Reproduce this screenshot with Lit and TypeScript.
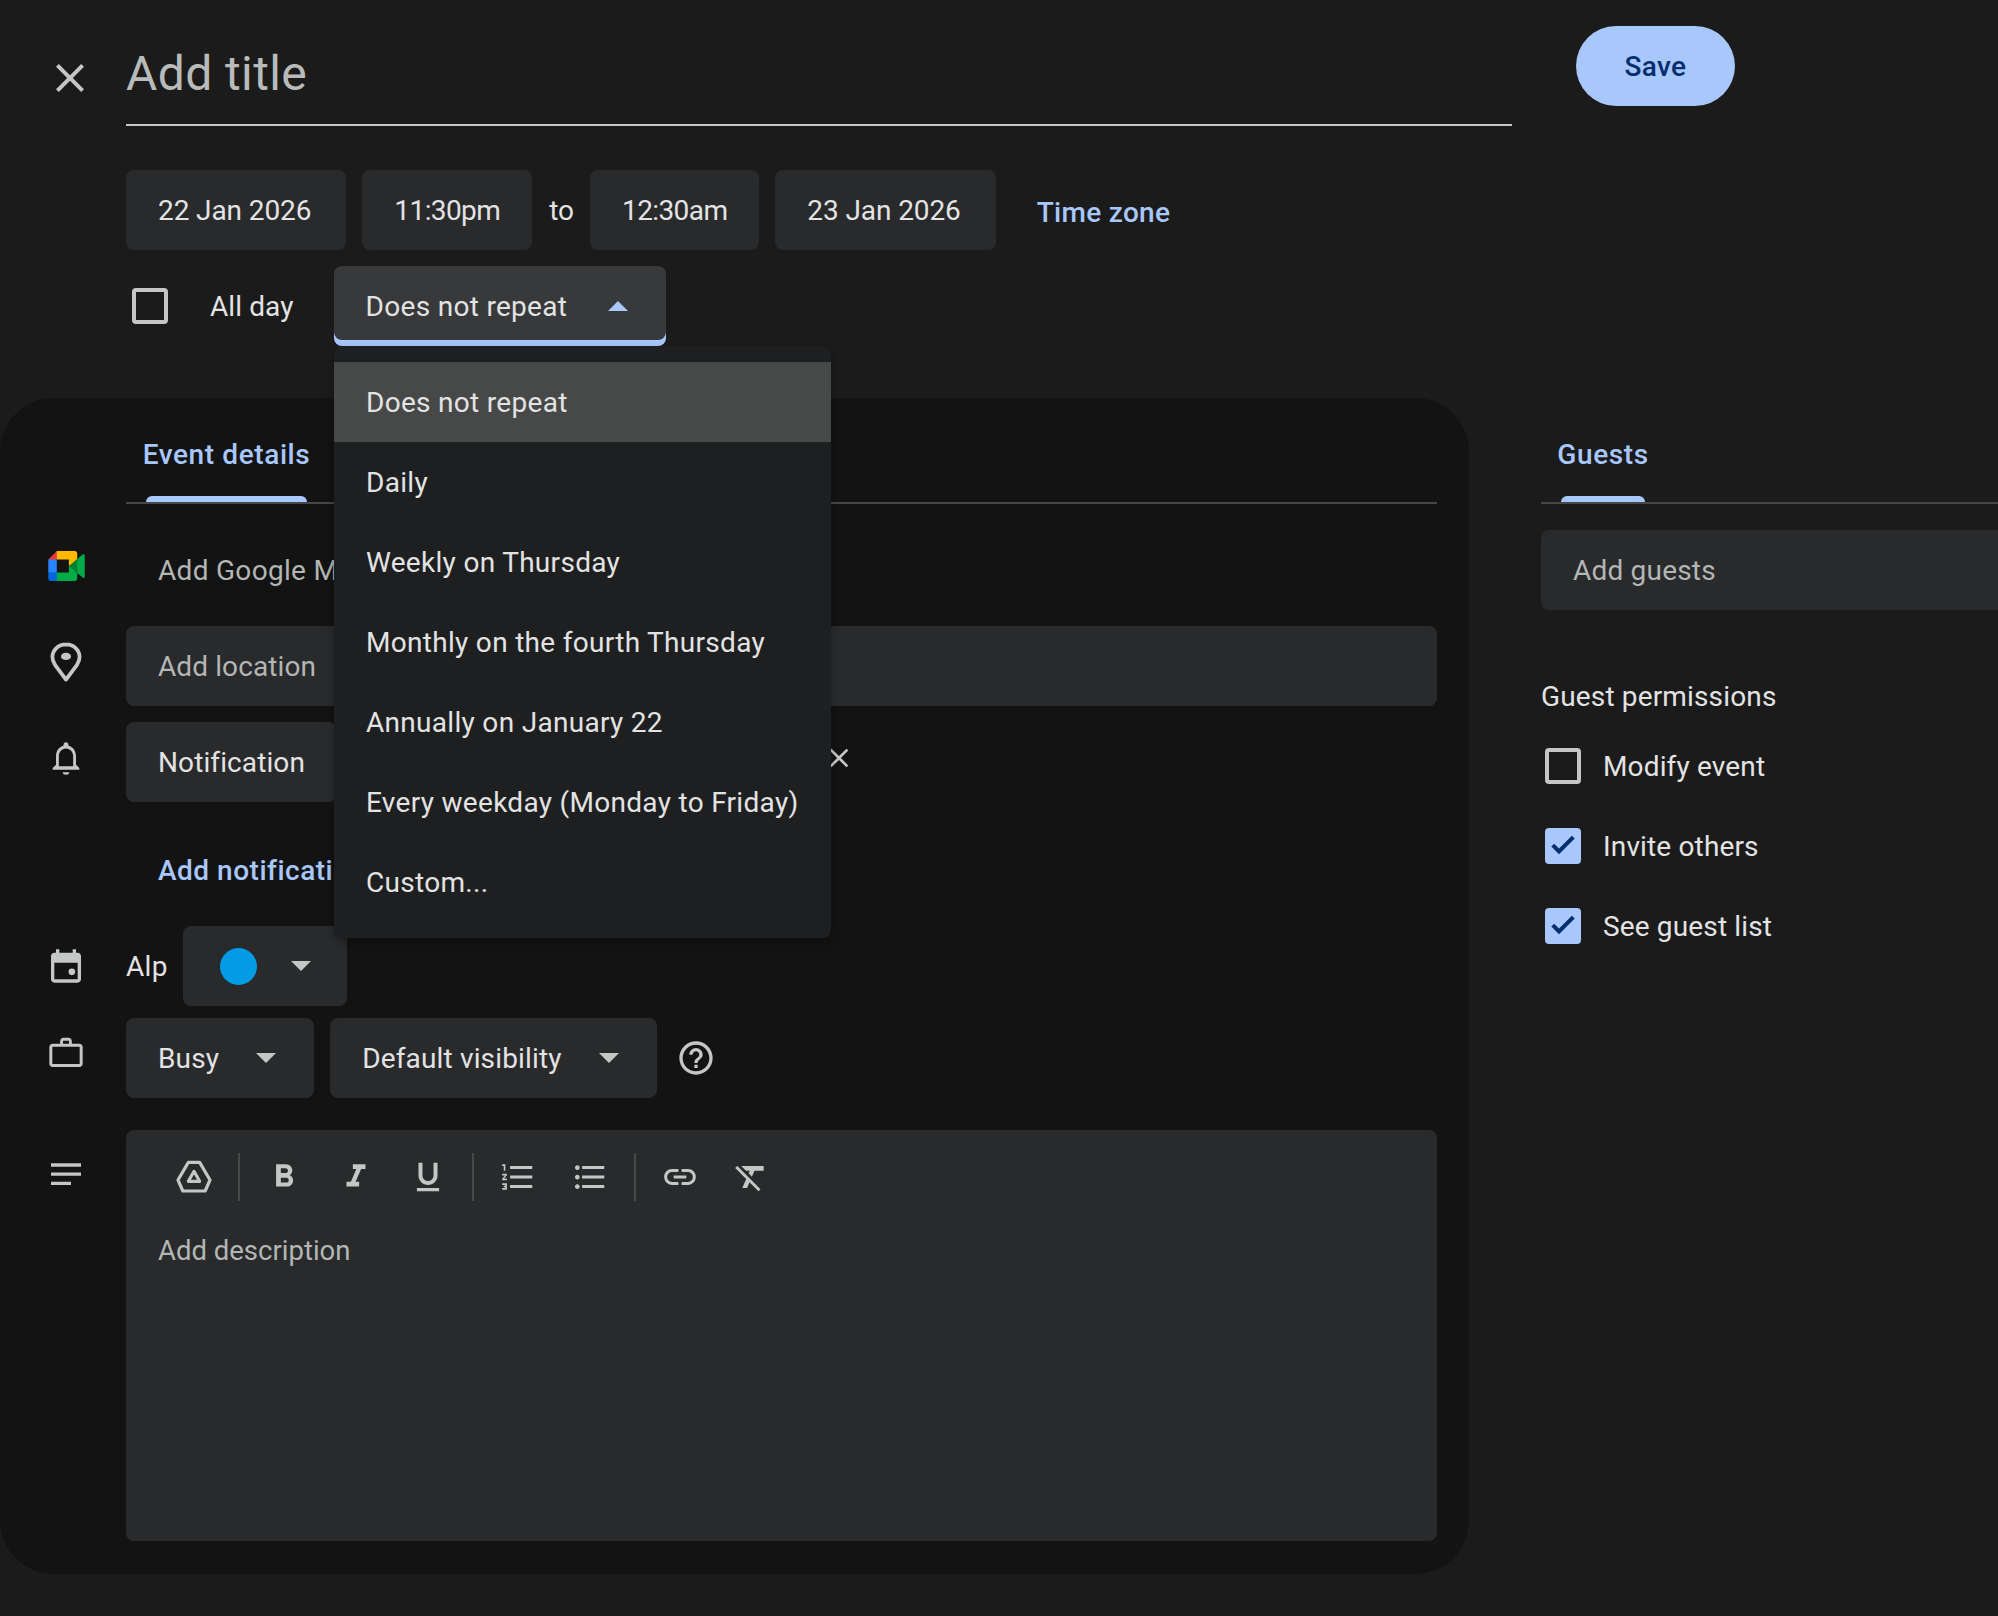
import { LitElement, html, css, svg } from 'lit';
import { customElement } from 'lit/decorators.js';

const repeatOptions = [
    'Does not repeat',
    'Daily',
    'Weekly on Thursday',
    'Monthly on the fourth Thursday',
    'Annually on January 22',
    'Every weekday (Monday to Friday)',
    'Custom...',
];

const permissions = [
    { label: 'Modify event', checked: false },
    { label: 'Invite others', checked: true },
    { label: 'See guest list', checked: true },
];

const icon = (size: number, body: unknown) => html`
    <svg class="icon" width=${size} height=${size} viewBox="0 0 24 24" fill="currentColor">${body}</svg>`;

const paths = {
    close: svg`<path d="M19 6.41 17.59 5 12 10.59 6.41 5 5 6.41 10.59 12 5 17.59 6.41 19 12 13.41 17.59 19 19 17.59 13.41 12z"/>`,
    pin: svg`<path fill="none" stroke="currentColor" stroke-width="1.9" stroke-linejoin="round" d="M12 3.2C8.2 3.2 5.2 6 5.2 9.5c0 1.4.6 2.7 1.3 3.9L12 20.8l5.5-7.4c.7-1.2 1.3-2.5 1.3-3.9C18.800 6 15.800 3.200 12 3.200z"/><ellipse cx="12" cy="9.200" rx="2.500" ry="1.800"/>`,
    bell: svg`<path d="M12 22c1.100 0 2-.5 2-1.500h-4c0 1 .9 1.500 2 1.500zm6-6v-5c0-3.070-1.630-5.640-4.500-6.320V4c0-.83-.67-1.500-1.500-1.500s-1.500.67-1.500 1.500v.68C7.640 5.360 6 7.920 6 11v5l-2 2v1h16v-1l-2-2zm-1.700 1H7.700v-6c0-2.480 1.800-4.700 4.300-4.700s4.300 2.220 4.300 4.700z"/>`,
    calendar: svg`<path d="M19 4h-1V2h-2v2H8V2H6v2H5c-1.100 0-2 .9-2 2v14c0 1.100.9 2 2 2h14c1.100 0 2-.9 2-2V6c0-1.100-.9-2-2-2zm0 16H5V10h14z"/><circle cx="15.500" cy="15.500" r="2"/>`,
    briefcase: svg`<path d="M20 7h-4.500V5.500c0-1.100-.9-2-2-2h-3c-1.100 0-2 .9-2 2V7H4c-1.100 0-2 .9-2 2v10c0 1.100.9 2 2 2h16c1.100 0 2-.9 2-2V9c0-1.100-.9-2-2-2zM10.200 5.200h3.600V7h-3.600zM20.200 19.200H3.800V8.800h16.400z"/>`,
    notes: svg`<path d="M3 5h18v2H3zm0 5.500h18v2H3zM3 16h12v2H3z"/>`,
    help: svg`<path d="M11 18h2v-2h-2zm1-16C6.480 2 2 6.480 2 12s4.480 10 10 10 10-4.480 10-10S17.520 2 12 2zm0 18c-4.410 0-8-3.590-8-8s3.590-8 8-8 8 3.590 8 8-3.590 8-8 8zm0-14c-2.210 0-4 1.790-4 4h2c0-1.100.9-2 2-2s2 .9 2 2c0 2-3 1.750-3 5h2c0-2.250 3-2.500 3-5 0-2.210-1.790-4-4-4z"/>`,
    drive: svg`<path fill="none" stroke="currentColor" stroke-width="1.900" stroke-linejoin="round" d="M8.600 3.200h6.800l6.200 10.600-2.900 6.600H5.300l-2.900-6.600z"/><path fill="none" stroke="currentColor" stroke-width="1.900" stroke-linejoin="round" d="M12 8.600l3.400 6H8.600z"/>`,
    bold: svg`<path d="M15.600 10.790c.97-.67 1.650-1.770 1.650-2.790 0-2.260-1.750-4-4-4H7v14h7.040c2.090 0 3.710-1.700 3.710-3.790 0-1.520-.86-2.820-2.150-3.420zM10 6.500h3c.83 0 1.500.67 1.500 1.500s-.67 1.500-1.500 1.500h-3v-3zm3.500 9H10v-3h3.500c.83 0 1.500.67 1.500 1.500s-.67 1.500-1.500 1.500z"/>`,
    italic: svg`<path d="M10 4v3h2.210l-3.420 8H6v3h8v-3h-2.210l3.420-8H18V4z"/>`,
    underline: svg`<path d="M12 17c3.310 0 6-2.690 6-6V3h-2.500v8c0 1.930-1.570 3.500-3.500 3.500S8.500 12.930 8.500 11V3H6v8c0 3.310 2.690 6 6 6zm-7 2v2h14v-2H5z"/>`,
    numbered: svg`<path d="M2 17h2v.5H3v1h1v.5H2v1h3v-4H2v1zm1-9h1V4H2v1h1v3zm-1 3h1.800L2 13.100v.9h3v-1H3.200L5 10.900V10H2v1zm5-6v2h14V5H7zm0 14h14v-2H7v2zm0-6h14v-2H7v2z"/>`,
    bulleted: svg`<path d="M4 10.500c-.83 0-1.500.67-1.500 1.500s.67 1.500 1.500 1.500 1.500-.67 1.500-1.500-.67-1.500-1.500-1.500zm0-6c-.83 0-1.500.67-1.500 1.500S3.170 7.500 4 7.500 5.500 6.830 5.500 6 4.830 4.500 4 4.500zm0 12c-.83 0-1.500.68-1.500 1.500s.68 1.500 1.500 1.500 1.500-.68 1.500-1.500-.67-1.500-1.500-1.500zM7 19h14v-2H7v2zm0-6h14v-2H7v2zm0-8v2h14V5H7z"/>`,
    link: svg`<path d="M3.900 12c0-1.710 1.390-3.100 3.100-3.100h4V7H7c-2.760 0-5 2.240-5 5s2.240 5 5 5h4v-1.900H7c-1.710 0-3.100-1.390-3.100-3.100zM8 13h8v-2H8v2zm9-6h-4v1.900h4c1.710 0 3.100 1.390 3.100 3.100s-1.390 3.100-3.100 3.100h-4V17h4c2.760 0 5-2.240 5-5s-2.240-5-5-5z"/>`,
    clear: svg`<path d="M3.270 5L2 6.270l6.970 6.970L6.500 19h3l1.570-3.660L16.730 21 18 19.730 3.550 5.270 3.270 5zM6 5v.18L8.820 8h2.400l-.72 1.680 2.100 2.100L14.210 8H20V5H6z"/>`,
    check: svg`<path d="M9.500 17.200 4.600 12.300l1.800-1.800 3.100 3.100 8.100-8.100 1.800 1.800z"/>`,
};

const meetLogo = html`
    <svg class="raised" width="37" height="30" viewBox="0 0 87.500 72">
        <path fill="#00832d" d="M49.500 36l8.530 9.750 11.470 7.330 2-17.020-2-16.640-11.690 6.440z"/>
        <path fill="#0066da" d="M0 51.500V66c0 3.315 2.685 6 6 6h14.500l3-10.960-3-9.540-9.950-3z"/>
        <path fill="#e53935" d="M20.500 0L0 20.500l10.550 3 9.950-3 2.950-9.410z"/>
        <path fill="#2684fc" d="M20.500 20.500H0v31h20.500z"/>
        <path fill="#00ac47" d="M82.600 8.680L69.500 19.420v33.660l13.160 10.790c1.970 1.540 4.850.135 4.850-2.370V11c0-2.535-2.945-3.925-4.910-2.320zM49.500 36v15.500h-29V72h43c3.315 0 6-2.685 6-6V53.080z"/>
        <path fill="#ffba00" d="M63.500 0h-43v20.500h29V36l20-16.570V6c0-3.315-2.685-6-6-6z"/>
    </svg>`;

@customElement('app-root')
export class AppRoot extends LitElement {
    static styles = css`
:host {
    display: block;
    width: 1998px;
    height: 1616px;
    overflow: hidden;
    position: relative;
    background: #1b1b1b;
    color: #e3e3e3;
    font-family: Roboto, "Liberation Sans", sans-serif;
    font-size: 28px;
    letter-spacing: 0.3px;
}

.icon {
    display: block;
    flex: none;
}

.header {
    display: flex;
    height: 126px;
}

.close {
    width: 126px;
    display: flex;
    justify-content: center;
    padding: 54px 0 0 14px;
    box-sizing: border-box;
    color: #c4c7c5;
}

.title {
    width: 1386px;
    box-sizing: border-box;
    border-bottom: 2px solid #c4c7c5;
    padding-top: 44px;
    font-size: 48px;
    line-height: 60px;
    letter-spacing: 0.4px;
    color: #b8bbb9;
}

.save {
    margin: 26px 0 0 64px;
    width: 159px;
    height: 80px;
    border-radius: 40px;
    background: #a8c7fa;
    color: #062e6f;
    font-weight: 500;
    display: flex;
    align-items: center;
    justify-content: center;
}

.dates {
    display: flex;
    align-items: center;
    gap: 16px;
    margin: 44px 0 0 126px;
}

.field {
    height: 80px;
    box-sizing: border-box;
    padding: 0 32px;
    display: flex;
    align-items: center;
    border-radius: 8px;
    background: #292a2c;
    white-space: nowrap;
    flex: none;
}

.date {
    letter-spacing: -0.1px;
    padding-right: 35px;
}

.time {
    letter-spacing: -0.6px;
    padding-right: 32px;
}

.muted {
    color: #b3b6b4;
}

.accent {
    color: #a8c7fa;
    font-weight: 500;
    letter-spacing: 0.5px;
}

.to {
    margin: 0 0 0 1px;
    letter-spacing: 0;
}

.tz {
    margin: 4px 0 0 25px;
    letter-spacing: 0.3px;
}

.repeat-row {
    display: flex;
    align-items: center;
    height: 80px;
    margin: 16px 0 0 132px;
}

.box {
    width: 36px;
    height: 36px;
    flex: none;
    box-sizing: border-box;
    border: 4px solid #c4c7c5;
    border-radius: 4px;
}

.box.on {
    background: #a8c7fa;
    border-color: #a8c7fa;
    color: #062e6f;
    display: flex;
    align-items: center;
    justify-content: center;
}

.allday {
    margin: 0 40px 0 42px;
    letter-spacing: 0.1px;
}

.select {
    width: 332px;
    height: 80px;
    box-sizing: border-box;
    padding: 0 32px;
    display: flex;
    align-items: center;
    justify-content: space-between;
    background: #37393b;
    border-radius: 8px;
    box-shadow: inset 0 -6px 0 #a8c7fa;
}

.up {
    width: 0;
    height: 0;
    margin-right: 6px;
    border: 10px solid transparent;
    border-top: 0;
    border-bottom: 10px solid #a8c7fa;
}

.down {
    width: 0;
    height: 0;
    border: 10px solid transparent;
    border-bottom: 0;
    border-top: 10px solid #c4c7c5;
}

.menu {
    position: absolute;
    left: 334px;
    top: 346px;
    width: 497px;
    height: 592px;
    box-sizing: border-box;
    padding: 16px 0;
    background: #1e1f21;
    border-radius: 8px;
    box-shadow: 0 4px 8px rgba(0, 0, 0, 0.3);
    z-index: 2;
}

.item {
    height: 80px;
    padding-left: 32px;
    display: flex;
    align-items: center;
    white-space: nowrap;
}

.item.active {
    background: #474948;
}

.body {
    display: flex;
    gap: 72px;
    margin-top: 52px;
}

.panel {
    width: 1469px;
    height: 1176px;
    flex: none;
    box-sizing: border-box;
    padding-right: 32px;
    background: #131313;
    border-radius: 54px;
}

.tabs {
    height: 106px;
    box-sizing: border-box;
    border-bottom: 2px solid #474747;
    display: flex;
}

.panel .tabs {
    margin-left: 126px;
}

.tab {
    position: relative;
    box-sizing: border-box;
    height: 104px;
    padding: 41px 0 0;
    line-height: 32px;
    color: #a8c7fa;
    font-weight: 500;
    letter-spacing: 0.6px;
    display: flex;
    justify-content: center;
    white-space: nowrap;
}

.tab.details {
    margin-left: 17px;
    width: 167px;
}

.tab.guests {
    margin-left: 16px;
    width: 92px;
}

.bar {
    position: absolute;
    bottom: 0;
    height: 6px;
    border-radius: 6px 6px 0 0;
    background: #a8c7fa;
}

.tab.details .bar {
    left: 3px;
    right: 3px;
}

.tab.guests .bar {
    left: 4px;
    right: 4px;
}

.rows {
    display: flex;
    flex-direction: column;
    gap: 16px;
    margin-top: 26px;
}

.row {
    display: flex;
    align-items: center;
    height: 80px;
}

.row.tall {
    margin-top: 12px;
}

.row.tight {
    margin-top: -4px;
}

.slot {
    width: 126px;
    flex: none;
    display: flex;
    justify-content: center;
    padding-left: 6px;
    box-sizing: border-box;
    color: #c4c7c5;
}

.raised {
    margin-bottom: 8px;
}

.lifted {
    margin-bottom: 12px;
}

.grow {
    flex: 1;
}

.text {
    padding-left: 32px;
    white-space: nowrap;
}

.tight-text {
    letter-spacing: 0.1px;
}

.remove {
    position: absolute;
    left: 823px;
    top: 742px;
    color: #c4c7c5;
    z-index: 1;
}

.calendar-name {
    margin-right: 15px;
}

.swatch {
    width: 164px;
    padding: 0 0 0 37px;
    gap: 34px;
}

.dot {
    width: 37px;
    height: 37px;
    border-radius: 50%;
    background: #039be5;
}

.gap {
    gap: 16px;
}

.drop {
    gap: 37px;
    padding-right: 38px;
    letter-spacing: 0.15px;
}

.help {
    margin-left: 19px;
    color: #c4c7c5;
}

.desc-row {
    display: flex;
    margin-top: 16px;
}

.notes {
    padding-top: 25px;
}

.desc {
    flex: 1;
    height: 411px;
    border-radius: 8px;
    background: #292a2c;
}

.toolbar {
    display: flex;
    align-items: center;
    height: 94px;
    color: #c4c7c5;
}

.tool {
    width: 36px;
    display: flex;
    justify-content: center;
    flex: none;
}

.sep {
    width: 2px;
    height: 48px;
    background: #474848;
    flex: none;
}

.placeholder {
    padding: 10px 0 0 32px;
    letter-spacing: 0;
    font-size: 27.5px;
}

.side {
    flex: 1;
    min-width: 0;
}

.side .tabs {
    margin-right: -40px;
}

.guest-input {
    margin-top: 26px;
    margin-right: -40px;
    letter-spacing: 0.2px;
}

.perm-title {
    margin-top: 69px;
    line-height: 36px;
    letter-spacing: 0.15px;
}

.perms {
    display: flex;
    flex-direction: column;
    gap: 44px;
    margin: 33px 0 0 4px;
    letter-spacing: 0.15px;
}

.perm {
    display: flex;
    align-items: center;
    height: 36px;
    gap: 22px;
}
`;

    render() {
        return html`
<div class="header">
    <div class="close">${icon(48, paths.close)}</div>
    <div class="title">Add title</div>
    <div class="save">Save</div>
</div>
<div class="dates">
    <div class="field date">22 Jan 2026</div>
    <div class="field time">11:30pm</div>
    <div class="to">to</div>
    <div class="field time">12:30am</div>
    <div class="field date">23 Jan 2026</div>
    <div class="accent tz">Time zone</div>
</div>
<div class="repeat-row">
    <div class="box"></div>
    <div class="allday">All day</div>
    <div class="select"><span>Does not repeat</span><span class="up"></span></div>
</div>
<div class="menu">
    ${repeatOptions.map((o, i) => html`<div class="item ${i === 0 ? 'active' : ''}">${o}</div>`)}
</div>
<div class="remove">${icon(32, paths.close)}</div>
<div class="body">
    <div class="panel">
        <div class="tabs">
            <div class="tab details">Event details<span class="bar"></span></div>
        </div>
        <div class="rows">
            <div class="row">
                <div class="slot">${meetLogo}</div>
                <div class="text muted">Add Google Meet video conferencing</div>
            </div>
            <div class="row">
                <div class="slot"><div class="raised">${icon(48, paths.pin)}</div></div>
                <div class="field grow muted tight-text">Add location</div>
            </div>
            <div class="row">
                <div class="slot"><div class="raised">${icon(40, paths.bell)}</div></div>
                <div class="field tight-text">Notification</div>
            </div>
            <div class="row tall">
                <div class="slot"></div>
                <div class="text accent">Add notification</div>
            </div>
            <div class="row">
                <div class="slot">${icon(40, paths.calendar)}</div>
                <div class="calendar-name">Alp</div>
                <div class="field swatch"><span class="dot"></span><span class="down"></span></div>
            </div>
            <div class="row tight">
                <div class="slot"><div class="lifted">${icon(40, paths.briefcase)}</div></div>
                <div class="gap row">
                    <div class="field drop">Busy<span class="down"></span></div>
                    <div class="field drop">Default visibility<span class="down"></span></div>
                </div>
                <div class="help">${icon(40, paths.help)}</div>
            </div>
            <div class="desc-row">
                <div class="slot notes">${icon(40, paths.notes)}</div>
                <div class="desc">
                    <div class="toolbar">
                        <div class="tool" style="margin-left:50px">${icon(40, paths.drive)}</div>
                        <div class="sep" style="margin:0 26px 0 26px"></div>
                        <div class="tool">${icon(38, paths.bold)}</div>
                        <div class="tool" style="margin-left:36px">${icon(38, paths.italic)}</div>
                        <div class="tool" style="margin-left:36px">${icon(38, paths.underline)}</div>
                        <div class="sep" style="margin:0 26px 0 26px"></div>
                        <div class="tool">${icon(38, paths.numbered)}</div>
                        <div class="tool" style="margin-left:36px">${icon(38, paths.bulleted)}</div>
                        <div class="sep" style="margin:0 26px 0 26px"></div>
                        <div class="tool">${icon(38, paths.link)}</div>
                        <div class="tool" style="margin-left:35px">${icon(38, paths.clear)}</div>
                    </div>
                    <div class="placeholder muted">Add description</div>
                </div>
            </div>
        </div>
    </div>
    <div class="side">
        <div class="tabs">
            <div class="tab guests">Guests<span class="bar"></span></div>
        </div>
        <div class="field muted guest-input">Add guests</div>
        <div class="perm-title">Guest permissions</div>
        <div class="perms">
            ${permissions.map((p) => html`
            <div class="perm">
                <div class="box ${p.checked ? 'on' : ''}">${p.checked ? icon(38, paths.check) : null}</div>
                <span>${p.label}</span>
            </div>`)}
        </div>
    </div>
</div>
`;
    }
}
